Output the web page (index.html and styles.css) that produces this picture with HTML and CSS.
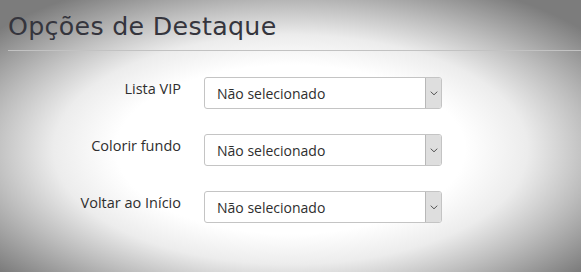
FILE: index.html
```html
<!DOCTYPE html>
<html lang="pt">
<head>
<meta charset="utf-8">
<title>Opções de Destaque</title>
<link rel="stylesheet" href="styles.css">
</head>
<body>
<div class="page">
  <h1 class="title">Opções de Destaque</h1>
  <div class="form">
    <div class="row">
      <label class="label">Lista VIP</label>
      <div class="select"><span class="value">Não selecionado</span><span class="arrow"><svg width="8" height="5" viewBox="0 0 8 5"><path d="M0.7 0.7 L4 3.8 L7.3 0.7" fill="none" stroke="#555" stroke-width="1"/></svg></span></div>
    </div>
    <div class="row">
      <label class="label">Colorir fundo</label>
      <div class="select"><span class="value">Não selecionado</span><span class="arrow"><svg width="8" height="5" viewBox="0 0 8 5"><path d="M0.7 0.7 L4 3.8 L7.3 0.7" fill="none" stroke="#555" stroke-width="1"/></svg></span></div>
    </div>
    <div class="row">
      <label class="label">Voltar ao Início</label>
      <div class="select"><span class="value">Não selecionado</span><span class="arrow"><svg width="8" height="5" viewBox="0 0 8 5"><path d="M0.7 0.7 L4 3.8 L7.3 0.7" fill="none" stroke="#555" stroke-width="1"/></svg></span></div>
    </div>
  </div>
</div>
</body>
</html>
```
FILE: styles.css
```css
html, body {
  margin: 0;
  height: 100%;
}
body {
  width: 581px;
  height: 272px;
  overflow: hidden;
  background: radial-gradient(ellipse 60% 62% at 50% 55%, #ffffff 0%, #ffffff 50%, #ececec 68%, #bdbdbd 86%, #7c7c7c 110%);
  font-family: "Open Sans", "Noto Sans", sans-serif;
}
.page {
  padding-top: 12px;
}
.title {
  margin: 0 0 0 8px;
  padding: 0 0 8px 0;
  font-family: "DejaVu Sans", sans-serif;
  font-weight: normal;
  font-size: 25.3px;
  line-height: 30px;
  color: #35353d;
  letter-spacing: 0.3px;
  border-bottom: 1px solid #c2c2c2;
}
.form {
  padding-top: 26px;
  display: flex;
  flex-direction: column;
  gap: 25px;
}
.row {
  display: grid;
  grid-template-columns: 181px 238px;
  column-gap: 23px;
  align-items: start;
}
.label {
  text-align: right;
  font-size: 14.5px;
  line-height: 18px;
  padding-top: 3px;
  color: #2e2e2e;
}
.select {
  display: flex;
  height: 30px;
  border: 1px solid #c4c4c4;
  border-radius: 3px;
  background: #fff;
  overflow: hidden;
}
.value {
  flex: 1;
  padding-left: 12px;
  font-size: 14px;
  line-height: 32px;
  color: #2e2e2e;
}
.arrow {
  width: 15px;
  border-left: 1px solid #b8b8b8;
  background: #dedede;
  display: flex;
  align-items: center;
  justify-content: center;
}
```
